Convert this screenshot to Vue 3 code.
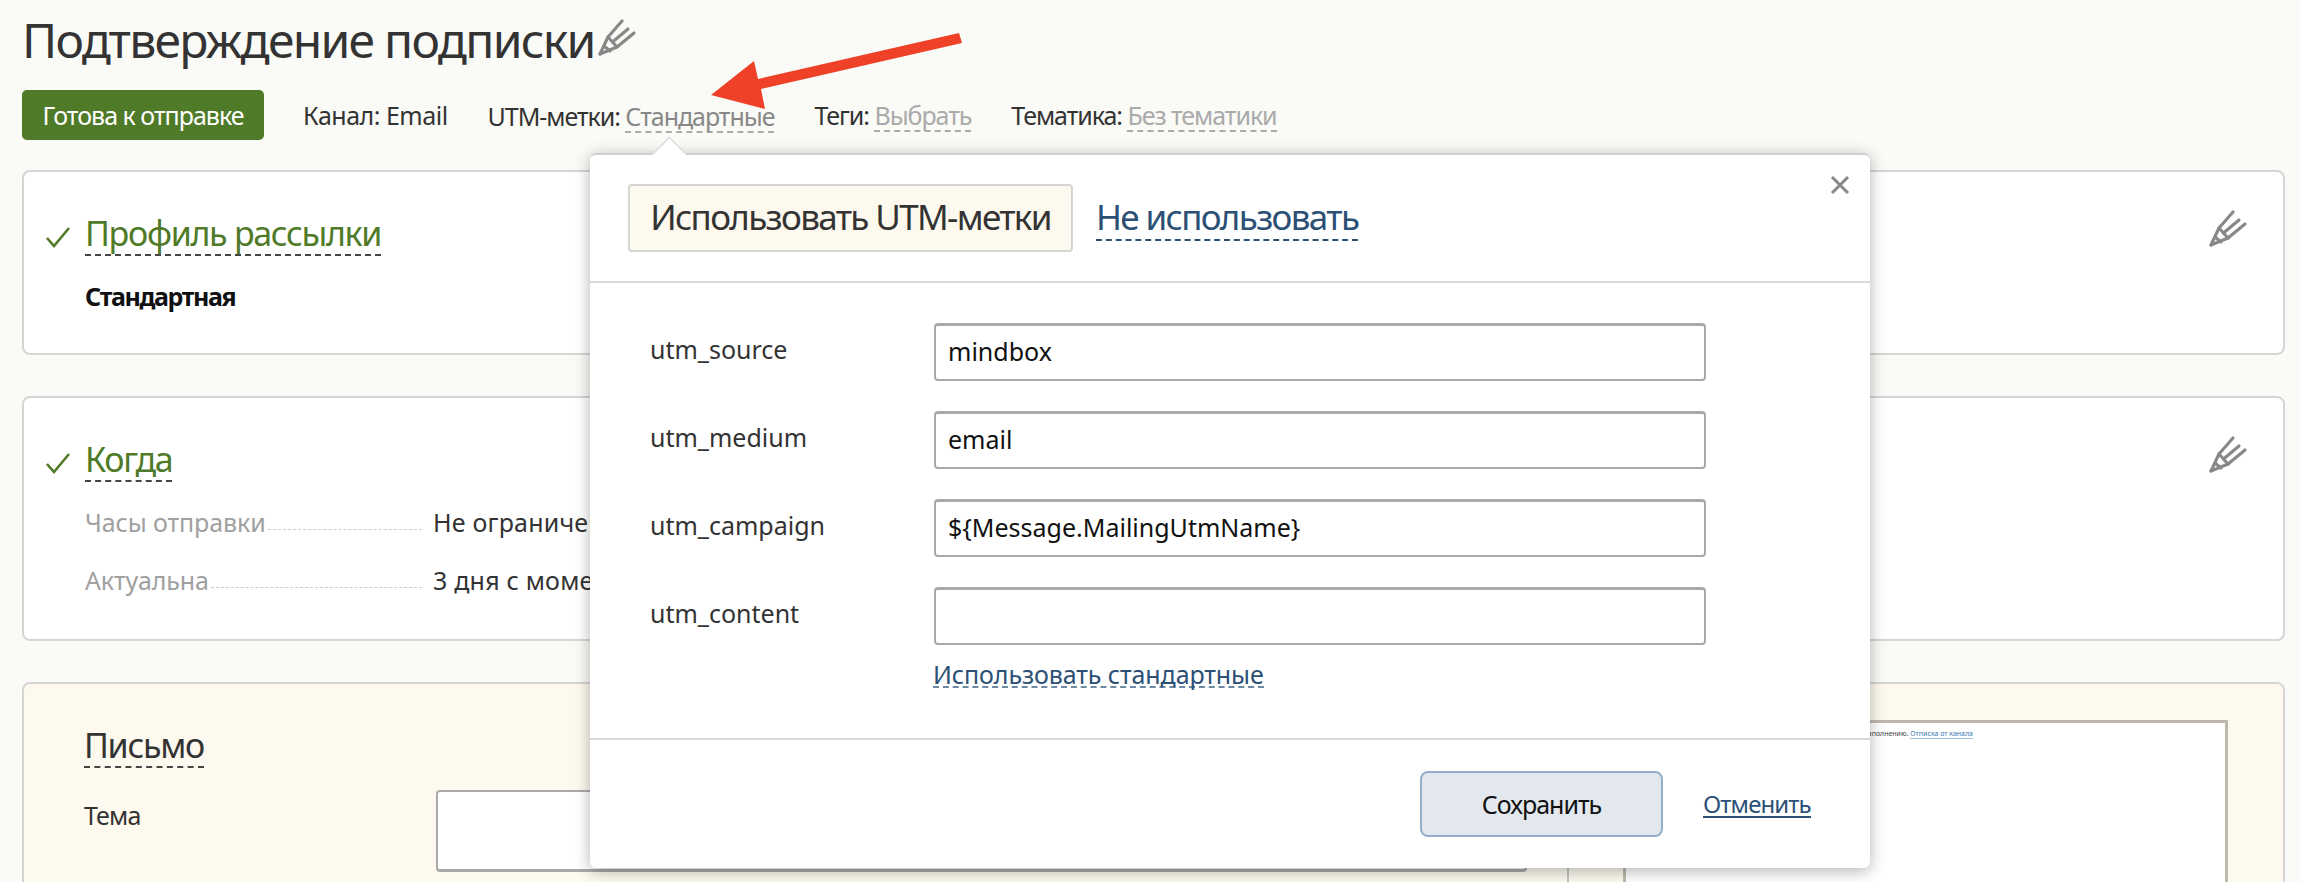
<template>
  <div class="page">
    <div class="title-row">
      <h1 class="title">Подтверждение подписки</h1>
      <svg class="pencil pencil-title" viewBox="0 0 38 38"><use href="#pen" /></svg>
    </div>

    <div class="meta">
      <button class="status">Готова к отправке</button>
      <span class="meta-item channel">Канал: Email</span>
      <span class="meta-item utm">UTM-метки: <a class="meta-link">Стандартные</a></span>
      <span class="meta-item">Теги: <a class="meta-link light">Выбрать</a></span>
      <span class="meta-item">Тематика: <a class="meta-link light">Без тематики</a></span>
    </div>

    <section class="card card-profile">
      <div class="card-head">
        <svg class="check" viewBox="0 0 26 22"><path d="M2 12l7 8L24 2" /></svg>
        <span class="card-title">Профиль рассылки</span>
        <svg class="pencil" viewBox="0 0 38 38"><use href="#pen" /></svg>
      </div>
      <div class="profile-value">Стандартная</div>
    </section>

    <section class="card card-when">
      <div class="card-head">
        <svg class="check" viewBox="0 0 26 22"><path d="M2 12l7 8L24 2" /></svg>
        <span class="card-title">Когда</span>
        <svg class="pencil" viewBox="0 0 38 38"><use href="#pen" /></svg>
      </div>
      <div class="when-rows">
        <div v-for="row in whenRows" :key="row.label" class="when-row">
          <span class="when-label">{{ row.label }}<i class="leader" /></span>
          <span class="when-value">{{ row.value }}</span>
        </div>
      </div>
    </section>

    <section class="card card-letter">
      <div class="letter-main">
        <div class="letter-title">Письмо</div>
        <div class="subject-row">
          <span class="subject-label">Тема</span>
          <div class="subject-input" />
        </div>
      </div>
      <div class="letter-gutter" />
      <div class="preview">
        <div class="preview-text">Вы подписались на рассылку при заполнению. <a>Отписка от канала</a></div>
      </div>
    </section>

    <svg class="red-arrow" width="270" height="90" viewBox="0 0 270 90">
      <path d="M248 2 L251 12 L50 58 L54 78 L0 64 L43 30 L47 48 Z" />
    </svg>

    <div class="popover">
      <i class="popover-tip" />
      <svg class="close" viewBox="0 0 20 20"><path d="M2 2l16 16M18 2L2 18" /></svg>
      <div class="popover-head">
        <span class="tab-active">Использовать UTM-метки</span>
        <a class="tab-link">Не использовать</a>
      </div>
      <div class="popover-body">
        <div v-for="f in utmFields" :key="f.name" class="utm-row">
          <label class="utm-label">{{ f.name }}</label>
          <div class="utm-input">{{ f.value }}</div>
        </div>
        <a class="use-default">Использовать стандартные</a>
      </div>
      <div class="popover-foot">
        <button class="save">Сохранить</button>
        <a class="cancel">Отменить</a>
      </div>
    </div>

    <svg width="0" height="0" class="defs">
      <defs>
        <g id="pen" fill="none" stroke="#888" stroke-width="3.1" stroke-linecap="round" stroke-linejoin="round">
          <path d="M2 36 L10 19 L24 3" />
          <path d="M14.5 24 L30 11" />
          <path d="M10 19 L19 29 L36 15" />
          <path d="M2 36 L19 29" />
          <path d="M6 28 L12 33" />
        </g>
      </defs>
    </svg>
  </div>
</template>

<script setup>
const whenRows = [
  { label: 'Часы отправки', value: 'Не ограничено' },
  { label: 'Актуальна', value: '3 дня с момента' },
];

const utmFields = [
  { name: 'utm_source', value: 'mindbox' },
  { name: 'utm_medium', value: 'email' },
  { name: 'utm_campaign', value: '${Message.MailingUtmName}' },
  { name: 'utm_content', value: '' },
];
</script>

<style>
html,
body {
  margin: 0;
  background: #fafaf6;
  overflow: hidden;
}
</style>

<style scoped>
.page {
  position: relative;
  width: 2300px;
  height: 882px;
  overflow: hidden;
  box-sizing: border-box;
  padding: 0 15px 0 22px;
  background: #fafaf6;
  color: #333;
  font-family: 'Noto Sans', 'Open Sans', sans-serif;
  font-size: 25px;
}
.defs {
  position: absolute;
}
.title-row {
  display: flex;
  align-items: flex-start;
  height: 90px;
  padding-top: 10px;
  box-sizing: border-box;
}
.title {
  margin: 0;
  font-size: 48px;
  font-weight: 400;
  line-height: 60px;
  letter-spacing: -1.7px;
}
.pencil {
  width: 38px;
  height: 38px;
  flex: none;
  margin-left: auto;
}
.pencil-title {
  margin: 8px 0 0 3px;
}
.meta {
  display: flex;
  align-items: center;
  height: 50px;
  margin-bottom: 30px;
  letter-spacing: -1.05px;
}
.status {
  width: 242px;
  height: 50px;
  margin-right: 39px;
  border: 0;
  border-radius: 5px;
  background: #4f7a28;
  color: #fff;
  font: inherit;
  letter-spacing: -1px;
}
.meta-item {
  margin-right: 40px;
}
.meta-item.channel {
  letter-spacing: -0.5px;
}
.meta-item.utm {
  padding-top: 2px;
}
.meta-link {
  display: inline-block;
  line-height: 30px;
  color: #888;
  border-bottom: 2px dashed #aaa;
}
.meta-link.light {
  color: #aaa;
}
.card {
  position: relative;
  box-sizing: border-box;
  border: 2px solid #d5d5d5;
  border-radius: 8px;
  background: #fff;
  margin-bottom: 41px;
  padding: 37px 36px 0 21px;
}
.card-profile {
  height: 185px;
}
.card-when {
  height: 245px;
}
.card-head {
  display: flex;
  align-items: flex-start;
}
.check {
  width: 26px;
  height: 22px;
  flex: none;
  margin: 17px 14px 0 0;
  fill: none;
  stroke: #4f7a28;
  stroke-width: 2.6;
}
.card-title {
  margin-top: 4px;
  color: #4f7a28;
  font-size: 34px;
  line-height: 41px;
  letter-spacing: -1.3px;
  border-bottom: 2px dashed #444;
}
.profile-value {
  margin: 23px 0 0 40px;
  font-weight: 700;
  color: #111;
  letter-spacing: -1.4px;
}
.when-rows {
  margin: 11px 0 0 40px;
}
.when-row {
  display: grid;
  grid-template-columns: 337px 1fr;
  height: 58px;
  align-items: center;
}
.when-label {
  display: flex;
  color: #a0a0a0;
  letter-spacing: -0.1px;
}
.leader {
  flex: 1;
  margin: 0 0 9px 2px;
  border-bottom: 1px dashed #ccc;
}
.when-value {
  margin-left: 11px;
  white-space: nowrap;
  letter-spacing: 0.2px;
}
.card-letter {
  display: flex;
  height: 400px;
  padding: 0;
  background: #fdf9ee;
}
.letter-main {
  width: 1543px;
  box-sizing: border-box;
  padding: 41px 0 0 60px;
}
.letter-title {
  width: fit-content;
  font-size: 34px;
  line-height: 41px;
  letter-spacing: -1.3px;
  border-bottom: 2px dashed #444;
}
.subject-row {
  display: flex;
  margin-top: 22px;
}
.subject-label {
  width: 352px;
  margin-top: 8px;
  letter-spacing: -0.8px;
}
.subject-input {
  position: relative;
  width: 1091px;
  height: 82px;
  box-sizing: border-box;
  background: #fff;
  border: 2px solid #a9a9a9;
  border-bottom-width: 3px;
  border-radius: 4px;
}
.subject-input::after {
  content: '';
  position: absolute;
  right: 14px;
  bottom: 1px;
  width: 2px;
  height: 2px;
  background: #777;
  box-shadow: 8px 0 0 #777;
}
.letter-gutter {
  width: 56px;
  flex: none;
  border-left: 2px solid #c5c5c5;
  box-sizing: border-box;
}
.preview {
  width: 605px;
  flex: none;
  margin-top: 36px;
  box-sizing: border-box;
  border: 3px solid #bdb9ac;
  background: #fff;
  font-size: 7px;
  line-height: 10px;
  color: #444;
}
.preview-text {
  width: 347px;
  padding-top: 6px;
  text-align: right;
  white-space: nowrap;
}
.preview-text a {
  color: #3a78b5;
  border-bottom: 1px solid #9cc0e0;
}
.red-arrow {
  position: absolute;
  left: 711px;
  top: 31px;
}
.red-arrow path {
  fill: #ee4127;
}
.popover {
  position: absolute;
  left: 590px;
  top: 153px;
  width: 1280px;
  height: 715px;
  box-sizing: border-box;
  background: #fff;
  border-top: 2px solid #d0d0d0;
  border-radius: 6px;
  box-shadow: 0 3px 16px rgba(0, 0, 0, 0.3);
}
.popover-tip {
  position: absolute;
  left: 67px;
  top: -13px;
  width: 25px;
  height: 25px;
  background: #fff;
  box-sizing: border-box;
  border-left: 1px solid #d0d0d0;
  border-top: 1px solid #d0d0d0;
  transform: rotate(45deg);
}
.close {
  position: absolute;
  right: 20px;
  top: 20px;
  width: 20px;
  height: 20px;
  fill: none;
  stroke: #888;
  stroke-width: 3;
}
.popover-head {
  position: relative;
  display: flex;
  align-items: center;
  height: 128px;
  padding-left: 38px;
  box-sizing: border-box;
  border-bottom: 2px solid #d8d8d8;
  font-size: 35px;
  letter-spacing: -1.65px;
}
.tab-active {
  box-sizing: border-box;
  width: 445px;
  height: 68px;
  line-height: 62px;
  text-align: center;
  background: #fdf9ee;
  border: 2px solid #d5d5d5;
  border-radius: 4px;
  margin-right: 23px;
}
.tab-link {
  color: #2c5075;
  line-height: 44px;
  border-bottom: 2px dashed #2c5075;
}
.popover-body {
  height: 457px;
  box-sizing: border-box;
  padding: 40px 0 0 60px;
  border-bottom: 2px solid #d8d8d8;
}
.utm-row {
  display: flex;
  margin-bottom: 30px;
}
.utm-label {
  width: 284px;
  padding-top: 9px;
}
.utm-input {
  width: 772px;
  height: 58px;
  box-sizing: border-box;
  padding: 0 12px;
  line-height: 50px;
  color: #111;
  border: 2px solid #aaa;
  border-top-width: 3px;
  border-radius: 4px;
}
.use-default {
  display: block;
  width: fit-content;
  margin: -13px 0 0 283px;
  color: #2c5075;
  line-height: 24px;
  letter-spacing: -0.1px;
  border-bottom: 2px dashed #6d88a3;
}
.popover-foot {
  display: flex;
  align-items: center;
  padding: 31px 0 0 830px;
}
.save {
  width: 243px;
  height: 66px;
  margin-right: 40px;
  border: 2px solid #93aec6;
  border-radius: 8px;
  background: #e2e8ee;
  color: #111;
  font: inherit;
  letter-spacing: -1px;
}
.cancel {
  color: #2c5075;
  font-size: 24px;
  letter-spacing: -0.9px;
  line-height: 25px;
  border-bottom: 2px solid #2c5075;
}
</style>
